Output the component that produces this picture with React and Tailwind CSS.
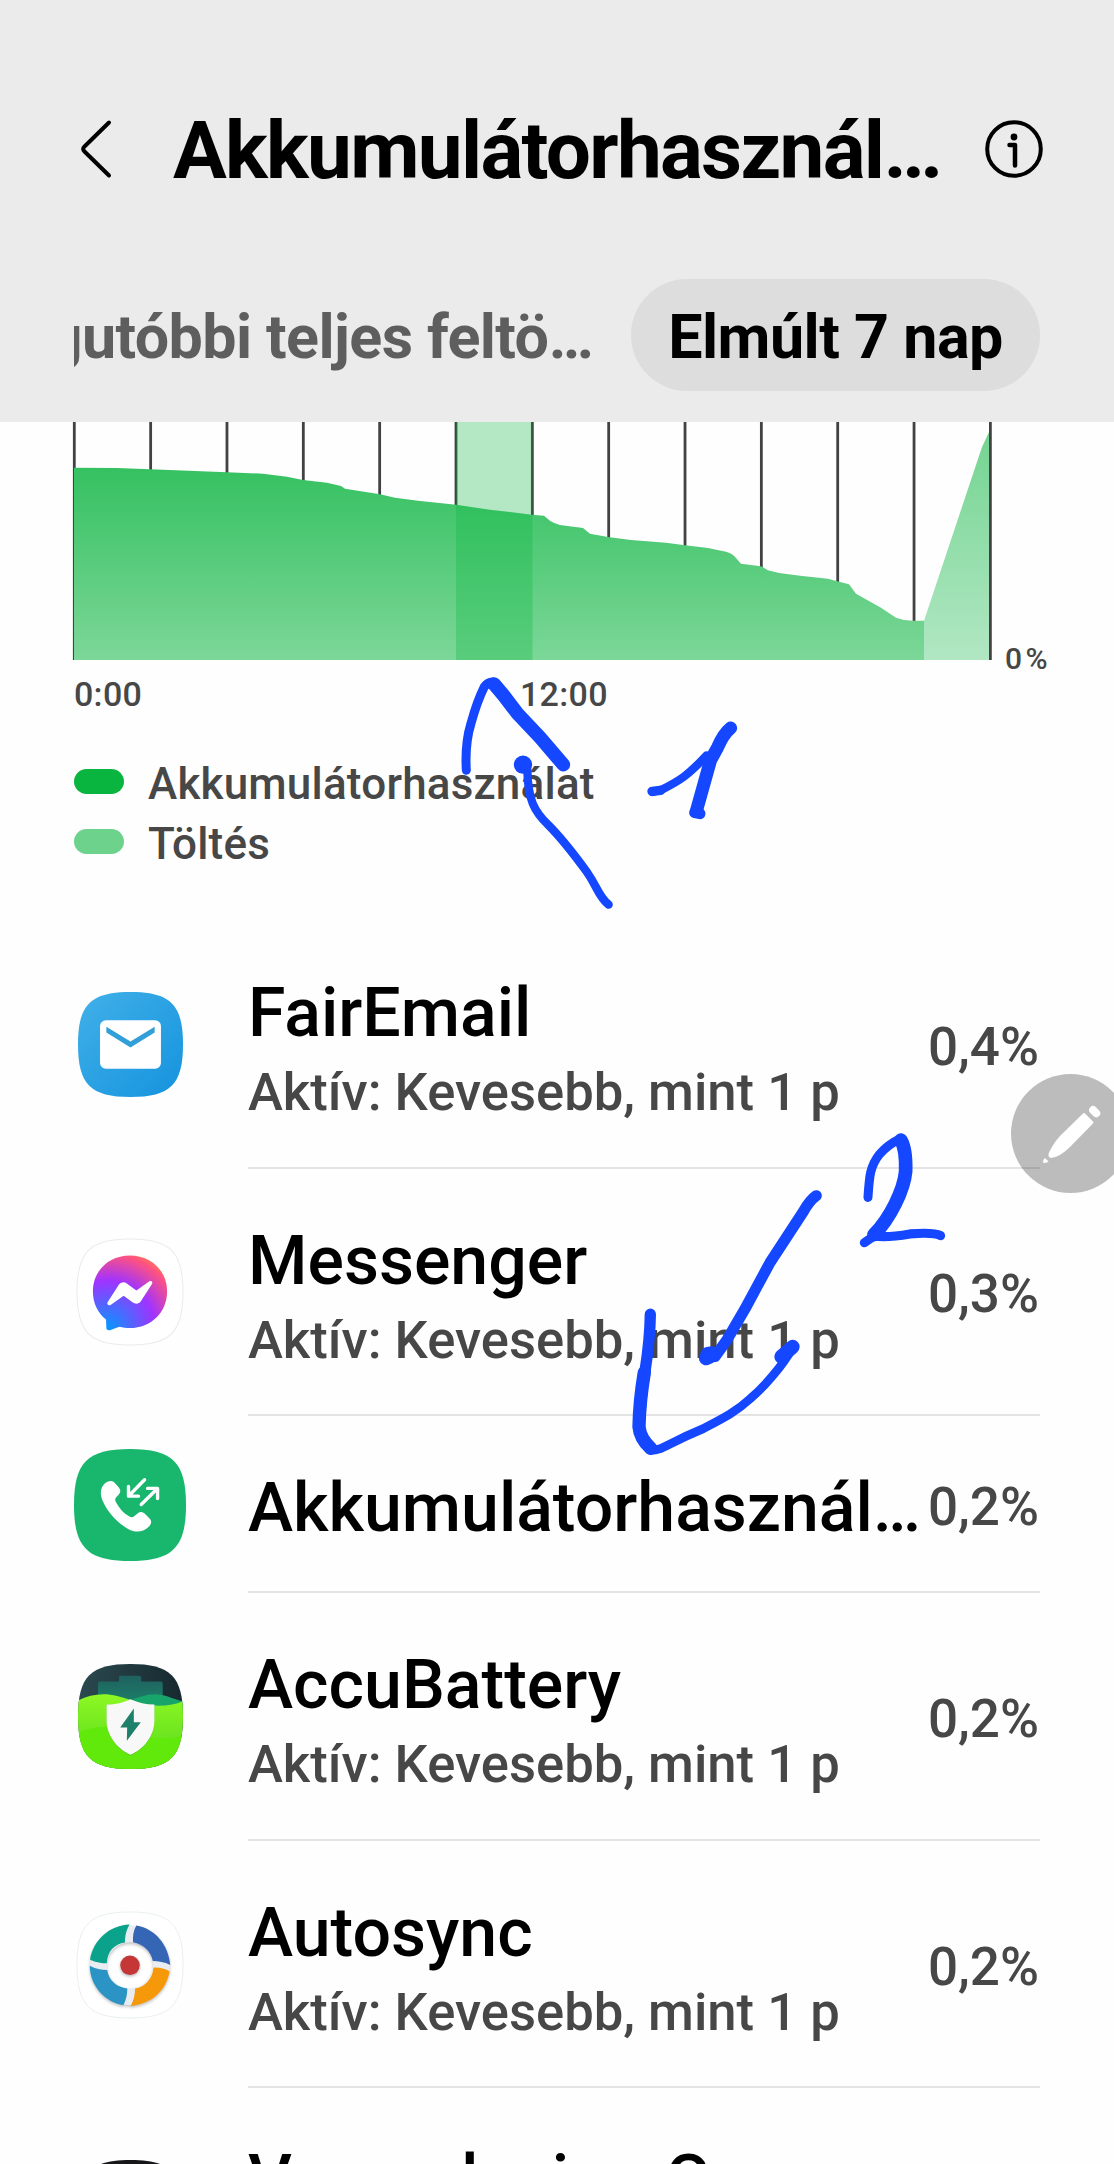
const SQUIRCLE = "M50 0C88 0 100 12 100 50S88 100 50 100 0 88 0 50 12 0 50 0Z";

const MailIcon = () => (
  <svg viewBox="0 0 100 100" className="size-[105px]">
    <defs>
      <linearGradient id="mail" x1="0" y1="0" x2="1" y2="1">
        <stop offset="0" stopColor="#41b0e8" />
        <stop offset="1" stopColor="#1593de" />
      </linearGradient>
    </defs>
    <path d={SQUIRCLE} fill="url(#mail)" />
    <rect x="21" y="27" width="58" height="46" rx="5.5" fill="#fff" />
    <path d="M27 33.2L50 47.2 73 33.2V38.6L50 52.8 27 38.6Z" fill="#329fd8" />
  </svg>
);

const MessengerIcon = () => (
  <svg viewBox="0 0 100 100" className="size-[106px] overflow-visible">
    <defs>
      <radialGradient id="msg" cx=".19" cy=".99" r="1.09">
        <stop offset="0" stopColor="#0099ff" />
        <stop offset=".6" stopColor="#a033ff" />
        <stop offset=".93" stopColor="#ff5280" />
        <stop offset="1" stopColor="#ff7061" />
      </radialGradient>
    </defs>
    <path d={SQUIRCLE} fill="#fff" stroke="#ebebeb" strokeWidth="1" />
    <path
      d="M50 15.5C70 15.5 85 30 85 49.5S70 84 50 84C46.500 84 43 83.500 40 82.700L31 86C29 86.500 27.800 85.500 27.700 84L27.400 76C19.500 69.500 15 60.500 15 49.500 15 30 30 15.500 50 15.500Z"
      fill="url(#msg)"
    />
    <path
      d="M29 59.400L39.300 43.300C41 40.700 44.500 40 47 41.900L56 48.500 68 40C70 38.700 72 40.500 70.700 42.500L60.400 58.600C58.700 61.200 55.200 61.900 52.700 60L44 53.500 31.700 62.200C30 63.500 27.700 61.500 29 59.400Z"
      fill="#fff"
    />
  </svg>
);

const CallIcon = () => (
  <svg viewBox="73 84 335 335" className="size-[112px]">
    <g transform="translate(73 84) scale(3.35)">
      <path d={SQUIRCLE} fill="#18b76d" />
    </g>
    <path
      d="M165 187C174 178 187 177 194 184L207 199C213 206 213 213 207 220L198 230C195 235 196 239 199 244C209 262 222 277 239 286C244 289 249 289 253 285L264 276C271 271 278 272 285 278L299 292C306 299 305 307 298 315C283 332 258 336 236 324C204 306 173 273 158 237C150 218 152 199 165 187Z"
      fill="#fff"
    />
    <g fill="none" stroke="#fff" strokeWidth="10" strokeLinecap="round" strokeLinejoin="round">
      <path d="M284 176L238 223M236 196V225H266" />
      <path d="M274 250L322 203M293 202H323V232" />
    </g>
  </svg>
);

const AccuBatteryIcon = () => (
  <svg viewBox="82 72 316 316" className="size-[105px]">
    <defs>
      <clipPath id="accuClip">
        <path d={SQUIRCLE} transform="translate(82 72) scale(3.16)" />
      </clipPath>
      <linearGradient id="accuDark" x1="0" y1="0" x2="1" y2="0">
        <stop offset="0" stopColor="#2b494f" />
        <stop offset="1" stopColor="#16292f" />
      </linearGradient>
      <linearGradient id="accuGreen" x1="0" y1="0" x2="0" y2="1">
        <stop offset="0" stopColor="#8df723" />
        <stop offset="1" stopColor="#55d81d" />
      </linearGradient>
      <linearGradient id="accuTeal" x1="0" y1="0" x2="0" y2="1">
        <stop offset="0" stopColor="#1f6060" />
        <stop offset="1" stopColor="#1c8468" />
      </linearGradient>
    </defs>
    <g clipPath="url(#accuClip)">
      <path d="M82 72H398V388H82Z" fill="url(#accuDark)" />
      <path d="M205 112Q205 107 210 107H267Q272 107 272 112V125H332Q337 125 337 131V200H142V131Q142 125 148 125H205Z" fill="url(#accuTeal)" />
      <path d="M235 184C275 164 315 156 350 169C370 176 385 182 398 184V210H235Z" fill="#18a56c" />
      <path d="M82 182C120 162 160 158 200 168C245 180 275 195 310 197C345 199 375 194 398 184V388H82Z" fill="url(#accuGreen)" />
      <path d="M82 276C120 263 165 256 205 266C255 280 290 296 325 296C355 296 380 292 398 288V388H82Z" fill="#62e90c" />
    </g>
    <path d="M240 180C217 190 196 195 168 195V246C169 291 202 330 240 348C280 330 311 291 312 246V195C286 195 263 190 240 180Z" fill="#38861e" opacity=".4" />
    <path d="M240 178C217 189 196 194 168 194V244C169 289 202 328 240 345C280 328 311 289 312 244V194C286 194 263 189 240 178Z" fill="#f8f8f8" />
    <path d="M250 206L209 263H230L229 303L271 247H250Z" fill="#1d806b" />
  </svg>
);

const AutosyncIcon = () => (
  <svg viewBox="82 94 316 316" className="size-[106px] overflow-visible">
    <path d={SQUIRCLE} transform="translate(82 94) scale(3.16)" fill="#fff" stroke="#e8eef0" strokeWidth=".9" />
    <g className="drop-shadow-[0_5px_5px_rgba(0,0,0,0.25)]">
      <circle cx="240" cy="253" r="94" fill="none" stroke="#e9edf2" strokeWidth="50" />
      <path d="M239 131C176 133 129 181 121 236C138 244 155 247 171 247C172 213 193 189 225 185C225 163 229 148 239 131Z" fill="#0aa28b" />
      <path d="M259 134C315 143 355 192 360 252C342 243 325 240 308 240C302 211 280 190 249 184C248 165 250 149 259 134Z" fill="#3565b5" />
      <path d="M358 271C350 327 302 371 242 374C251 358 255 341 255 322C285 318 307 293 310 260C327 259 343 262 358 271Z" fill="#f59809" />
      <path d="M120 254C137 263 155 267 172 267C177 298 201 319 232 322C232 341 228 358 220 372C166 363 120 314 120 254Z" fill="#2b94c5" />
    </g>
    <circle cx="240" cy="253" r="54" fill="#fff" />
    <circle cx="240" cy="253" r="29" fill="#c53636" className="drop-shadow-[0_4px_4px_rgba(0,0,0,0.3)]" />
  </svg>
);

const DarkIcon = () => (
  <svg viewBox="0 0 100 100" className="size-[105px]">
    <path d={SQUIRCLE} fill="#17171a" />
  </svg>
);

const ACTIVE = "Aktív: Kevesebb, mint 1 p";

const apps = [
  { name: "FairEmail", detail: ACTIVE, percent: "0,4%", Icon: MailIcon },
  { name: "Messenger", detail: ACTIVE, percent: "0,3%", Icon: MessengerIcon },
  { name: "Akkumulátorhasznál…", percent: "0,2%", Icon: CallIcon },
  { name: "AccuBattery", detail: ACTIVE, percent: "0,2%", Icon: AccuBatteryIcon },
  { name: "Autosync", detail: ACTIVE, percent: "0,2%", Icon: AutosyncIcon },
];

const Header = () => (
  <header className="h-[422px] shrink-0 bg-[#ebebeb] pt-[94px]">
    <div className="flex h-[110px] items-center">
      <svg viewBox="0 0 40 64" className="ml-[76px] h-16 w-10 shrink-0">
        <path d="M33 5.500L8.500 29.500Q6 32 8.500 34.500L33 58.500" fill="none" stroke="#000" strokeWidth="4" strokeLinecap="round" />
      </svg>
      <h1 className="ml-[57px] w-[812px] pt-1 text-[80px] leading-[96px] font-bold tracking-[-1.7px] whitespace-nowrap">
        Akkumulátorhasznál…
      </h1>
      <svg viewBox="0 0 58 58" className="size-[58px] shrink-0">
        <circle cx="29" cy="29" r="26.800" fill="none" stroke="#000" strokeWidth="4" />
        <circle cx="29" cy="17" r="3.400" />
        <path d="M24.500 25H30V45.500" fill="none" stroke="#000" strokeWidth="4.500" strokeLinecap="round" strokeLinejoin="round" />
      </svg>
    </div>
    <div className="mt-[75px] ml-[74px] flex h-28 items-center">
      <div className="flex w-[519px] justify-end overflow-hidden pt-1 text-[61px] leading-[74px] font-bold tracking-[-0.6px] whitespace-nowrap text-[#5e5e5e]">
        Legutóbbi teljes feltö…
      </div>
      <div className="ml-[38px] flex h-28 w-[409px] items-center justify-center rounded-full bg-[#dddddd] pt-1 text-[61px] leading-[74px] font-bold tracking-[-0.5px] whitespace-nowrap">
        Elmúlt 7 nap
      </div>
    </div>
  </header>
);

const USAGE =
  "M74 467.700L117 468 150 469.300 227 472.300 263 473.700 287 476.700 303 480 327 482.700 341 486 345 488.700 380 494.300 395 497.700 418 500.700 456 504.700 490 509.700 532 514.700 544 515.700 550 520.700 Q555 524 560 525L583 528 590 533.700 608 537 631 540 666 542.700 685 545.300 708 548 726 551.700 Q732 553 736 558L741 563.700 761 566.300 768 570.300 779 573 800 575.700 828 578.700 837 581.300 849 584.300 856 593.700 881 607.700 896 617.700 904 620 913 620.700H924V660H74Z";

const Chart = () => (
  <section className="h-[499px] shrink-0">
    <div className="flex items-end">
      <svg viewBox="0 422 1005 238" className="h-[238px] w-[1005px] shrink-0">
        <defs>
          <linearGradient id="usage" gradientUnits="userSpaceOnUse" x1="0" y1="468" x2="0" y2="660">
            <stop offset="0" stopColor="#35c161" />
            <stop offset="1" stopColor="#7cd798" />
          </linearGradient>
          <linearGradient id="charge" gradientUnits="userSpaceOnUse" x1="0" y1="432" x2="0" y2="660">
            <stop offset="0" stopColor="#74d491" />
            <stop offset="1" stopColor="#b1e7c3" />
          </linearGradient>
        </defs>
        {Array.from({ length: 13 }, (_, i) => (
          <path key={i} d={`M${74.3 + i * 76.34} 422V660`} stroke="#424242" strokeWidth="2.800" />
        ))}
        <path d={USAGE} fill="url(#usage)" />
        <path d="M924 620.700L982 447 989 432V660H924Z" fill="url(#charge)" />
        <path d="M456 422H532.500V660H456Z" fill="#0ab53f" opacity=".3" />
      </svg>
      <span className="mb-[-14px] text-[30px] leading-[30px] font-medium tracking-[3.5px] text-[#474747]">0%</span>
    </div>
    <div className="mt-[17px] ml-[74px] flex text-[34px] leading-[34px] font-medium tracking-[0.3px] text-[#474747]">
      <span className="w-[446px]">0:00</span>
      <span>12:00</span>
    </div>
    <div className="mt-[43px] ml-[74px] text-[44px] leading-[60px] font-medium tracking-[0.2px] text-[#474747]">
      <div className="flex h-[60px] items-center">
        <span className="mb-1.5 h-[25px] w-[50px] rounded-full bg-[#0ab53f]" />
        <span className="ml-6">Akkumulátorhasználat</span>
      </div>
      <div className="flex h-[60px] items-center">
        <span className="mb-1.5 h-[25px] w-[50px] rounded-full bg-[#6cd28c]" />
        <span className="ml-6">Töltés</span>
      </div>
    </div>
  </section>
);

const AppRow = ({ name, detail, percent, Icon }) => (
  <div className={`flex shrink-0 ${detail ? "h-[247.6px]" : "h-[177px]"}`}>
    <div className="flex w-[112px] items-center justify-center">
      <Icon />
    </div>
    <div className="ml-[62px] flex w-[792px] items-center border-b-2 border-[#e4e4e4]">
      <div className="w-[682px] shrink-0 pt-[9px] whitespace-nowrap">
        <div className="text-[68px] leading-[80px] font-medium text-black">{name}</div>
        {detail && (
          <div className="mt-2 text-[52.6px] leading-[62px] font-medium text-[#474747]">{detail}</div>
        )}
      </div>
      <div className="flex w-[110px] justify-end pt-1.5 pr-px text-[53px] leading-[62px] font-medium whitespace-nowrap text-[#474747]">
        {percent}
      </div>
    </div>
  </div>
);

const PenButton = () => (
  <div className="absolute top-[1074px] left-[1011px] size-[119px] rounded-full bg-black/26">
    <svg viewBox="0 0 119 119" className="size-full">
      <g fill="#fff">
        <path d="M72 39.500Q73 38.500 74 39.500L82 47.500Q83 48.500 82 49.500L59 73Q49 83 40 84Q37 83.500 37.500 80Q41 71 49 62Z" />
        <rect x="77.500" y="33.500" width="12.500" height="8" rx="4" transform="rotate(45 83.500 37.500)" />
        <path d="M34 84L37.500 87.500Q36 88.500 33.500 89Q31.500 89 32 87Q33 84.500 34 84Z" />
      </g>
    </svg>
  </div>
);

// Handwritten notes drawn on top of the page
const Ink = () => (
  <svg viewBox="0 0 1114 2164" className="pointer-events-none absolute inset-0 h-[2164px] w-[1114px]">
    <g transform="translate(440 660) scale(.3333)" fill="none" stroke="#1447ff" strokeLinecap="round" strokeLinejoin="round">
      <path d="M79 331C76 280 80 232 93 190C104 150 118 110 133 80Q143 67 158 66" strokeWidth="27" />
      <path d="M162 72L190 105 232 160 300 232 370 314" strokeWidth="41" />
      <circle cx="249" cy="314" r="14" strokeWidth="27" />
      <path d="M262 330C264 420 283 455 325 495C370 540 400 580 440 635C475 685 475 710 506 734" strokeWidth="25" />
      <path d="M637 396L665 389C720 362 745 345 800 286" strokeWidth="25" />
      <path d="M636 394L662 391" strokeWidth="28" />
      <path d="M872 204Q850 222 833 262L812 300 769 454" strokeWidth="39" />
      <path d="M764 458L780 461" strokeWidth="33" />
    </g>
    <g transform="translate(600 950) scale(.3333 .338)" fill="none" stroke="#1447ff" strokeLinecap="round" strokeLinejoin="round">
      <path d="M649 727Q630 740 610 774L510 925 435 1062 380 1155 345 1203" strokeWidth="33" />
      <path d="M323 1196L334 1194M318 1207L330 1202" strokeWidth="43" />
      <path d="M151 1078Q150 1150 136 1240 122 1320 117 1410" strokeWidth="34" />
      <path d="M133 1250Q119 1330 117 1410 120 1445 152 1474" strokeWidth="40" />
      <path d="M152 1480C190 1480 190 1465 310 1416C370 1385 410 1365 450 1328C490 1295 545 1235 582 1170" strokeWidth="26" />
      <path d="M544 1203L578 1174" strokeWidth="42" />
      <path d="M804 732C808 670 810 640 838 605Q865 575 900 559" strokeWidth="27" />
      <path d="M903 563Q919 590 917 655C912 710 870 795 822 842" strokeWidth="41" />
      <path d="M793 866L822 846Q860 852 930 840 1000 834 1022 845" strokeWidth="27" />
    </g>
  </svg>
);

const App = () => (
  <div className="relative flex h-[2164px] w-[1114px] flex-col overflow-hidden bg-[#fefefe] font-['Roboto',sans-serif] text-black">
    <Header />
    <Chart />
    <main className="flex flex-col pl-[74px]">
      {apps.map((app) => (
        <AppRow key={app.name} {...app} />
      ))}
      {/* Next entry, only its top edge is in view */}
      <div className="flex h-[248px] shrink-0">
        <div className="flex w-[112px] items-center justify-center">
          <DarkIcon />
        </div>
        <div className="ml-[62px] pt-[52px] text-[68px] leading-[80px] font-medium tracking-[0.7px] whitespace-nowrap">
          Vesandesign C
        </div>
      </div>
    </main>
    <PenButton />
    <Ink />
  </div>
);

export default App;
